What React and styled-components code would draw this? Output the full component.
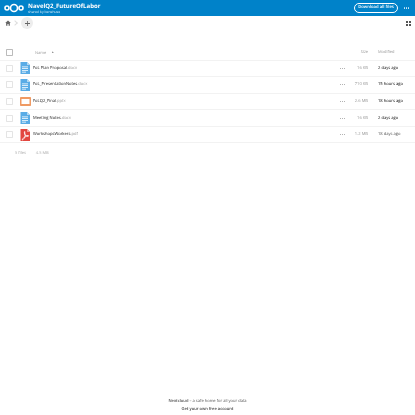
import React from 'react';
import styled, { createGlobalStyle } from 'styled-components';

const GlobalStyle = createGlobalStyle`
  html, body {
    margin: 0;
    padding: 0;
    background: #fff;
    font-family: "Open Sans", "Liberation Sans", sans-serif;
    text-rendering: geometricPrecision;
  }
`;

const files = [
  { name: 'FoL Plan Proposal', ext: '.docx', type: 'doc', size: '16 KB', modified: '2 days ago', age: '#111' },
  { name: 'FoL_PresentationNotes', ext: '.docx', type: 'doc', size: '710 KB', modified: '15 hours ago', age: '#000' },
  { name: 'FoLQ2_Final', ext: '.pptx', type: 'ppt', size: '2.6 MB', modified: '18 hours ago', age: '#000' },
  { name: 'Meeting Notes', ext: '.docx', type: 'doc', size: '16 KB', modified: '2 days ago', age: '#111' },
  { name: 'WorkshopsWorkers', ext: '.pdf', type: 'pdf', size: '1.2 MB', modified: '18 days ago', age: '#555' },
];

const Page = styled.div`
  width: 415px;
  height: 415px;
  display: flex;
  flex-direction: column;
  overflow: hidden;
  color: #222;
  filter: blur(0.25px);
`;

const TopBar = styled.header`
  height: 16px;
  flex: none;
  background: #0082c9;
  display: flex;
  align-items: center;
  padding: 0 0 0 4px;
  color: #fff;
`;

const TitleBlock = styled.div`
  margin-left: 4px;
  display: flex;
  flex-direction: column;
`;

const Title = styled.div`
  font-size: 6px;
  line-height: 7px;
  font-weight: 700;
`;

const Subtitle = styled.div`
  font-size: 3.4px;
  line-height: 4px;
  opacity: 0.85;
`;

const DownloadButton = styled.button`
  margin-left: auto;
  width: 44px;
  height: 10px;
  padding: 0;
  border: 0.7px solid #fff;
  border-radius: 5px;
  background: #0082c9;
  color: #fff;
  font: 600 4.2px/1 "Open Sans", sans-serif;
  text-rendering: geometricPrecision;
`;

const MoreDots = styled.div`
  width: 17px;
  display: flex;
  justify-content: center;
  gap: 0.5px;

  i {
    width: 1.1px;
    height: 1.1px;
    border-radius: 50%;
    background: ${({ $light }) => ($light ? '#d5ecf8' : '#999')};
  }
`;

const Crumbs = styled.nav`
  height: 15px;
  margin-top: -0.5px;
  flex: none;
  display: flex;
  align-items: center;
  padding: 0 5px;
`;

const Chevron = styled.span`
  width: 3px;
  height: 3px;
  margin: 0 4px 0 2px;
  border-top: 0.4px solid #ddd;
  border-right: 0.4px solid #ddd;
  transform: rotate(45deg);
`;

const AddButton = styled.div`
  width: 12px;
  height: 12px;
  border-radius: 50%;
  background: #ededed;
  display: flex;
  align-items: center;
  justify-content: center;
`;

const ViewToggle = styled.div`
  margin-left: auto;
  margin-right: -0.5px;
  display: grid;
  grid-template-columns: 2px 2px;
  gap: 1px;

  span {
    width: 2px;
    height: 2px;
    background: #555;
  }
`;

const Table = styled.div`
  margin-top: 14.5px;
  flex: none;
`;

const Row = styled.div`
  height: ${({ $head }) => ($head ? '15.5px' : '16.6px')};
  box-sizing: border-box;
  display: grid;
  grid-template-columns: 15px 17px 1fr 17px 17px 47px;
  align-items: center;
  border-bottom: 0.5px solid #f2f2f2;
  font-size: 4.1px;
`;

const CheckBox = styled.div`
  width: 5px;
  height: 5px;
  margin-left: 6px;
  border: 0.5px solid ${({ $big }) => ($big ? '#bbb' : '#e4e4e4')};
  border-radius: 0.8px;
`;

const IconCell = styled.div`
  display: flex;
  align-items: center;
  justify-content: center;
  margin-left: 3px;
`;

const FileName = styled.div`
  padding-left: 1px;
  white-space: nowrap;
  color: #222;
`;

const Ext = styled.span`
  color: #999;
`;

const ColHead = styled.div`
  color: #999;
  font-size: 4px;
  white-space: nowrap;
  padding-left: ${({ $pad }) => $pad || '0'};
  text-align: ${({ $right }) => ($right ? 'right' : 'left')};
`;

const SortArrow = styled.span`
  display: inline-block;
  margin-left: 5px;
  font-size: 3px;
  vertical-align: 0.5px;
  color: #888;
`;

const Size = styled.div`
  color: #999;
  text-align: right;
`;

const Modified = styled.div`
  padding-left: 10px;
  white-space: nowrap;
  color: ${({ $color }) => $color};
`;

const Summary = styled.div`
  height: 20px;
  display: flex;
  align-items: center;
  padding-left: 15px;
  font-size: 4px;
  color: #aaa;
  gap: 10px;
`;

const Footer = styled.footer`
  margin-top: auto;
  padding-bottom: 1px;
  text-align: center;
  font-size: 4.05px;
  line-height: 8px;
  color: #555;

  strong {
    font-weight: 600;
  }
`;

const FooterLink = styled.div`
  font-weight: 600;
  color: #444;
`;

const Logo = () => (
  <svg width="20" height="10" viewBox="0 0 40 20" fill="none" stroke="#fff" strokeWidth="3.2">
    <circle cx="20" cy="10" r="7" />
    <circle cx="6" cy="10" r="4" />
    <circle cx="34" cy="10" r="4" />
  </svg>
);

const HomeIcon = () => (
  <svg width="6" height="6" viewBox="0 0 16 16" fill="#666">
    <path d="M8 1 0.5 8H3v7h3.500v-4.500h3V15H13V8h2.500z" />
  </svg>
);

const PlusIcon = () => (
  <svg width="5" height="5" viewBox="0 0 10 10" fill="#666">
    <path d="M4.200 0h1.600v4.200H10v1.600H5.800V10H4.200V5.800H0V4.200h4.200z" />
  </svg>
);

const DocIcon = () => (
  <svg width="10" height="12" viewBox="0 0 20 24">
    <path d="M1 0h13l6 6v18H1z" fill="#5aace6" />
    <path d="M14 0l6 6h-6z" fill="#b4d9f3" />
    <path d="M4 9h12v1.600H4zM4 12.500h12v1.600H4zM4 16h12v1.600H4zM4 19.500h8v1.600H4z" fill="#fff" />
  </svg>
);

const PptIcon = () => (
  <svg width="11" height="9" viewBox="0 0 22 18">
    <rect x="0" y="0" width="22" height="18" rx="1.500" fill="#ef9a63" />
    <rect x="3" y="4" width="16" height="10" fill="#fff" />
  </svg>
);

const PdfIcon = () => (
  <svg width="10" height="12" viewBox="0 0 20 24">
    <path d="M1 0h13l6 6v18H1z" fill="#e2463f" />
    <path d="M14 0l6 6h-6z" fill="#f2a29e" />
    <path
      d="M9.500 5c-1.500 0 -.8 4 1 7.500C9 16 7 19 4.500 20.500c-1 .8 .3 1.800 1.500 .8 1.500-1.200 3-3.500 4-5.600 2-.7 4-1 6-1 1.500 0 2-1.400 .5-1.700-1.500-.3-4 0-5.500 .4-1-2-1.600-4-1.500-5.600 .1-1.500 .5-2.800 0-2.800z"
      fill="none"
      stroke="#fff"
      strokeWidth="1.600"
    />
  </svg>
);

const fileIcons = { doc: DocIcon, ppt: PptIcon, pdf: PdfIcon };

const Dots = ({ light }) => (
  <MoreDots $light={light}>
    <i />
    <i />
    <i />
  </MoreDots>
);

const FileRow = ({ file }) => {
  const Icon = fileIcons[file.type];
  return (
    <Row>
      <CheckBox />
      <IconCell>
        <Icon />
      </IconCell>
      <FileName>
        {file.name}
        <Ext>{file.ext}</Ext>
      </FileName>
      <Dots />
      <Size>{file.size}</Size>
      <Modified $color={file.age}>{file.modified}</Modified>
    </Row>
  );
};

const App = () => (
  <Page>
    <GlobalStyle />
    <TopBar>
      <Logo />
      <TitleBlock>
        <Title>NavelQ2_FutureOfLabor</Title>
        <Subtitle>shared by benehuse</Subtitle>
      </TitleBlock>
      <DownloadButton>Download all files</DownloadButton>
      <Dots light />
    </TopBar>

    <Crumbs>
      <HomeIcon />
      <Chevron />
      <AddButton>
        <PlusIcon />
      </AddButton>
      <ViewToggle>
        <span />
        <span />
        <span />
        <span />
      </ViewToggle>
    </Crumbs>

    <Table>
      <Row $head>
        <CheckBox $big />
        <span />
        <ColHead $pad="3px">
          Name<SortArrow>▲</SortArrow>
        </ColHead>
        <span />
        <ColHead $right>Size</ColHead>
        <ColHead $pad="10px">Modified</ColHead>
      </Row>
      {files.map((file) => (
        <FileRow key={file.name} file={file} />
      ))}
    </Table>

    <Summary>
      <span>5 files</span>
      <span>4.5 MB</span>
    </Summary>

    <Footer>
      <div>
        <strong>Nextcloud</strong> – a safe home for all your data
      </div>
      <FooterLink>Get your own free account</FooterLink>
    </Footer>
  </Page>
);

export default App;
